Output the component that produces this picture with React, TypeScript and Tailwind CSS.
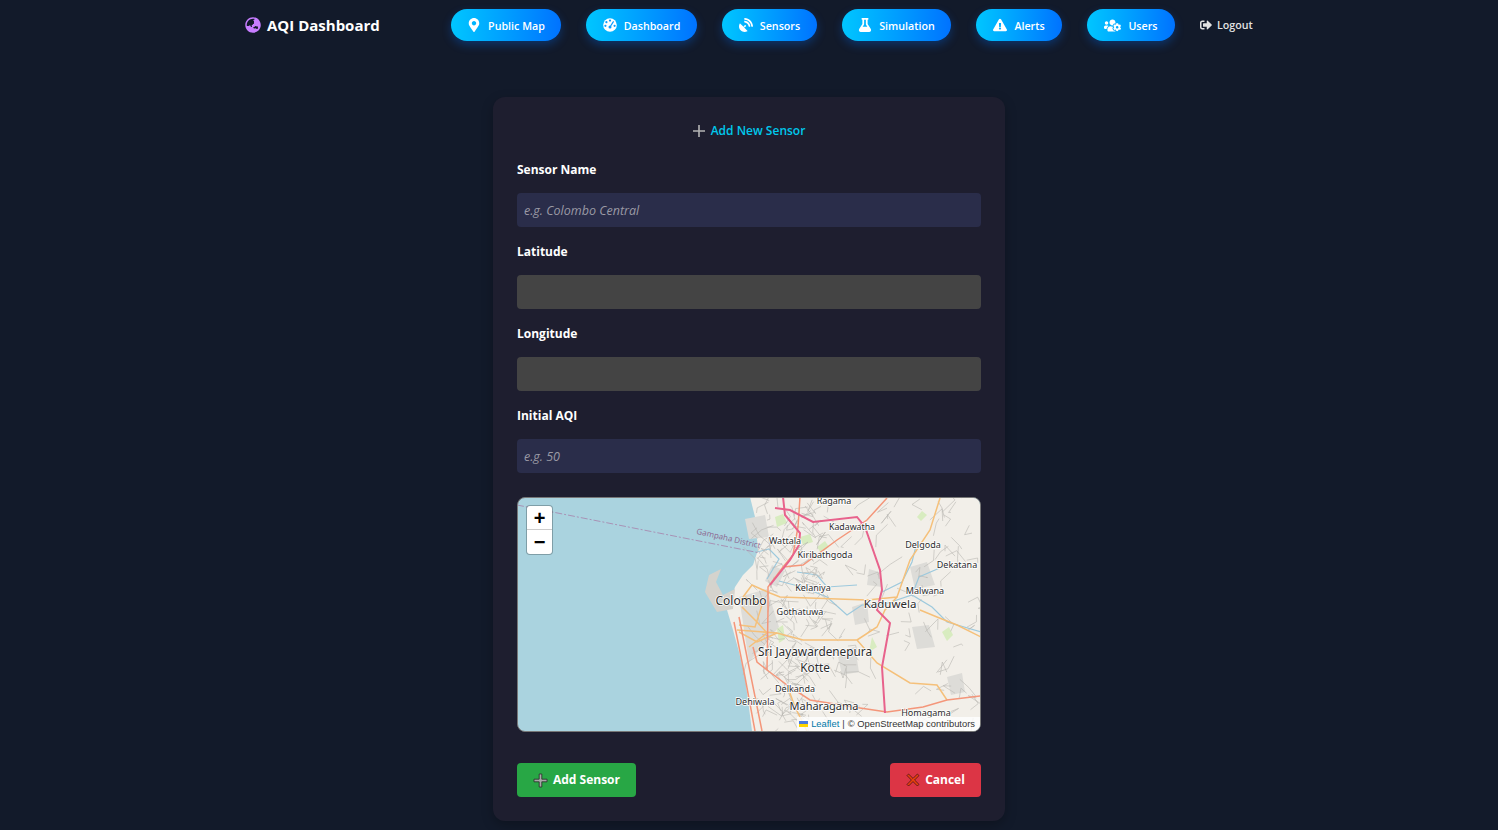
import { FaGlobeAsia, FaMapMarkerAlt, FaSatelliteDish, FaFlask, FaExclamationTriangle, FaUsersCog, FaSignOutAlt } from 'react-icons/fa'

function GaugeIcon({ className }: { className?: string }) {
  return (
    <svg className={className} width="14" height="14" viewBox="0 0 14 14">
      <circle cx="7" cy="7" r="6.8" fill="#fff" />
      <circle cx="7" cy="2.6" r="1.1" fill="#0a9cff" />
      <circle cx="3.4" cy="4.2" r="1.1" fill="#0a9cff" />
      <circle cx="2.4" cy="7.8" r="1.1" fill="#0a9cff" />
      <circle cx="11.6" cy="7.8" r="1.1" fill="#0a9cff" />
      <path d="M10.6 3.4 7.6 8" stroke="#0a9cff" strokeWidth="1.2" />
      <circle cx="7" cy="9" r="1.5" fill="#0a9cff" />
    </svg>
  )
}

const navLinks = [
  { label: 'Public Map', icon: FaMapMarkerAlt, width: 'w-[110px]', iconSize: 'text-[14px]' },
  { label: 'Dashboard', icon: GaugeIcon, width: 'w-[111px]', iconSize: '' },
  { label: 'Sensors', icon: FaSatelliteDish, width: 'w-[95px]', iconSize: 'text-[14px]' },
  { label: 'Simulation', icon: FaFlask, width: 'w-[109px]', iconSize: 'text-[14px]' },
  { label: 'Alerts', icon: FaExclamationTriangle, width: 'w-[86px]', iconSize: 'text-[14px]' },
  { label: 'Users', icon: FaUsersCog, width: 'w-[88px]', iconSize: 'text-[17px]' },
]

// motorways, trunk roads and secondary roads, traced off the tiles
const motorways = [
  'M258 11 L273 13 L296 25 L340 20 L348 30 L363 73 L365 93 L360 113 L373 126 L365 170 L368 216',
  'M266 0 L268 18 L283 36 L282 48 L273 63 L253 88',
]
const trunks = [
  'M370 1 L350 23 L320 43 L286 68 L266 70 L251 90 L251 113 L250 173 L270 188 L293 203 L343 211 L370 215 L406 210 L430 203 L464 199',
  'M283 0 L281 30 L276 58 L266 70',
  'M222 120 L232 170 L245 234',
  'M217 125 L228 180 L238 234',
  'M250 173 L240 165 L236 150',
]
const secondary = [
  'M423 1 L413 33 L393 63 L380 100 L350 103 L263 100 L253 96 L235 88 L226 100',
  'M220 133 L260 136 L286 143 L340 143 L360 166 L393 186 L420 188 L430 203',
  'M380 100 L368 113 L360 130 L340 143',
  'M225 110 L240 125 L250 136 L232 150',
  'M222 135 L240 145 L260 136',
  'M270 188 L278 210 L290 234',
  'M403 113 L420 120 L440 128 L464 140',
  'M228 100 L245 108 L238 130 L222 128',
]
const rivers = [
  'M240 55 L252 52 L262 62 L250 82',
  'M262 84 L285 90 L310 100 L330 118 L345 108 L365 108 L395 98 L415 110 L430 125 L464 135',
  'M280 75 L300 78 L310 90 L340 88',
  'M365 95 L385 85 L395 65 L400 45',
  'M395 98 L402 80 L425 70',
]
const parks = [
  'M300 50 L308 44 L312 50 L304 56Z',
  'M400 20 L405 14 L410 18 L404 24Z',
  'M258 20 L266 17 L270 26 L260 30Z',
  'M283 40 L293 37 L296 45 L286 48Z',
  'M425 135 L432 130 L436 138 L430 144Z',
  'M260 132 L266 128 L268 142 L262 146Z',
  'M355 140 L360 150 L352 155Z',
]
const urban = [
  'M352 72 L362 75 L365 90 L350 88Z',
  'M393 70 L410 65 L418 88 L398 92Z',
  'M395 130 L412 128 L418 150 L400 152Z',
  'M430 180 L445 176 L448 195 L434 198Z',
  'M320 155 L338 150 L342 175 L325 178Z',
  'M335 110 L350 105 L352 125 L338 128Z',
  'M228 22 L248 18 L252 40 L232 42Z',
  'M255 68 L268 74 L260 90 L248 84Z',
  'M222 100 L250 92 L262 130 L232 165Z',
]
const mapLabels = [
  { text: 'Ragama', x: 317, y: 7, size: 9 },
  { text: 'Kadawatha', x: 335, y: 33, size: 8.8 },
  { text: 'Wattala', x: 268, y: 47, size: 9 },
  { text: 'Kiribathgoda', x: 308, y: 61, size: 9 },
  { text: 'Delgoda', x: 406, y: 51, size: 9 },
  { text: 'Dekatana', x: 440, y: 71, size: 9 },
  { text: 'Kelaniya', x: 296, y: 94, size: 9 },
  { text: 'Malwana', x: 408, y: 97, size: 9 },
  { text: 'Colombo', x: 224, y: 108, size: 12 },
  { text: 'Kaduwela', x: 373, y: 111, size: 11.5 },
  { text: 'Gothatuwa', x: 283, y: 118, size: 9 },
  { text: 'Sri Jayawardenepura', x: 298, y: 159, size: 11.8 },
  { text: 'Kotte', x: 298, y: 175, size: 11.8 },
  { text: 'Delkanda', x: 278, y: 195, size: 9 },
  { text: 'Dehiwala', x: 238, y: 208, size: 9 },
  { text: 'Maharagama', x: 307, y: 213, size: 11 },
  { text: 'Homagama', x: 409, y: 219, size: 9 },
]

// the tiles' mesh of small roads, scattered over the land and thicker round the city
function minorRoads() {
  const roads: string[] = []
  let seed = 17
  const rnd = () => {
    seed = (seed * 16807) % 2147483647
    return seed / 2147483647
  }
  for (let i = 0; i < 280; i++) {
    const city = i % 2 === 0
    const x = city ? 235 + rnd() * 70 : 250 + rnd() * 214
    const y = rnd() * 234
    const coast = 250 - Math.abs(y - 100) * 0.05
    if (x < coast - 10) continue
    const x2 = x + (rnd() - 0.5) * 26
    const y2 = y + (rnd() - 0.5) * 26
    const x3 = x2 + (rnd() - 0.5) * 26
    const y3 = y2 + (rnd() - 0.5) * 26
    roads.push(`M${x.toFixed(1)} ${y.toFixed(1)} L${x2.toFixed(1)} ${y2.toFixed(1)} L${x3.toFixed(1)} ${y3.toFixed(1)}`)
  }
  return roads
}

function Field({ label, placeholder, disabled }: { label: string; placeholder?: string; disabled?: boolean }) {
  return (
    <div className="h-[82px]">
      <label className="block h-[34px] pt-[2px] text-[12px] leading-[18px] font-bold text-white">{label}</label>
      <input
        disabled={disabled}
        placeholder={placeholder}
        className={`block h-[34px] w-full rounded-[4px] px-[7px] text-[12.5px] text-white outline-none placeholder:italic placeholder:text-[#9a9aa5] ${disabled ? 'bg-[#444444]' : 'bg-[#2a2d4a]'}`}
      />
    </div>
  )
}

function SensorMap() {
  return (
    <div className="relative mt-[10px] h-[235px] overflow-hidden rounded-[8px] border border-[#777] bg-[#aad3df]">
      <svg className="block h-full w-full" viewBox="1 1 462 233" preserveAspectRatio="none">
        <path d="M233 0 L238 20 L241 53 L236 68 L226 78 L218 90 L214 104 L210 113 L216 133 L222 155 L228 180 L235 234 L464 234 L464 0Z" fill="#f2efe9" />
        <path d="M188 95 L192 78 L204 72 L199 85 L206 98 L218 92 L216 112 L200 115Z" fill="#d5d3cd" />
        {urban.map(d => <path key={d} d={d} fill="#dddcd8" />)}
        {parks.map(d => <path key={d} d={d} fill="#d8ecc0" />)}
        {rivers.map(d => <path key={d} d={d} fill="none" stroke="#9dc9dd" strokeWidth="1.2" />)}
        {minorRoads().map(d => <path key={d} d={d} fill="none" stroke="#b9b7b1" strokeWidth="0.6" />)}
        {secondary.map(d => <path key={d} d={d} fill="none" stroke="#f5c07a" strokeWidth="1.5" />)}
        {trunks.map(d => <path key={d} d={d} fill="none" stroke="#f4967a" strokeWidth="1.5" />)}
        {motorways.map(d => <path key={d} d={d} fill="none" stroke="#e8628c" strokeWidth="2" />)}
        <path d="M0 8 L243 56" fill="none" stroke="#a892b5" strokeWidth="1" strokeDasharray="7 2 2 2" />
        <text x="211" y="44" transform="rotate(13 211 44)" textAnchor="middle" fontSize="8" fill="#8e6c94" fontFamily="'Noto Sans', sans-serif">Gampaha District</text>
        {mapLabels.map(l => (
          <text
            key={l.text}
            x={l.x}
            y={l.y}
            textAnchor="middle"
            fontSize={l.size}
            fill="#2c2c2c"
            stroke="#fff"
            strokeWidth="1.5"
            paintOrder="stroke"
            fontFamily="'Noto Sans', sans-serif"
          >
            {l.text}
          </text>
        ))}
      </svg>

      <div className="absolute left-[9px] top-[8px] w-[25px] overflow-hidden rounded-[3px] bg-white shadow-[0_0_0_1px_rgba(0,0,0,0.25)]">
        <div className="flex h-[24px] items-center justify-center border-b border-[#ccc] text-[20px] leading-none font-bold text-black" style={{ fontFamily: "'Liberation Sans', sans-serif" }}>+</div>
        <div className="flex h-[24px] items-center justify-center text-[20px] leading-none font-bold text-black" style={{ fontFamily: "'Liberation Sans', sans-serif" }}>−</div>
      </div>

      <div className="absolute right-0 bottom-0 flex h-[14px] items-center bg-white/80 pr-[5px] pl-[2px] text-[9.4px] text-[#333]" style={{ fontFamily: "'Liberation Sans', sans-serif" }}>
        <svg className="mr-[3px]" width="9" height="6" viewBox="0 0 9 6">
          <rect width="9" height="3" fill="#4C7BE1" />
          <rect y="3" width="9" height="3" fill="#FFD500" />
        </svg>
        <span className="text-[#0078a8]">Leaflet</span>
        <span className="mx-[3px]">|</span>
        <span>© OpenStreetMap contributors</span>
      </div>
    </div>
  )
}

export default function App() {
  return (
    <div className="h-screen overflow-hidden bg-[#121a2a]" style={{ fontFamily: "'Open Sans', 'Noto Sans', sans-serif" }}>
      <nav className="flex h-[50px] items-center pl-[245px]">
        <div className="flex w-[206px] items-center gap-[6px] text-[15px] font-bold text-white">
          <FaGlobeAsia className="text-[16px] text-[#c77dff]" />
          <span>AQI Dashboard</span>
        </div>
        <div className="flex items-center gap-[25px]">
          {navLinks.map(({ label, icon: Icon, width, iconSize }) => (
            <a key={label} className={`flex h-[32px] items-center justify-center gap-[7px] rounded-full bg-gradient-to-r from-[#00c6ff] to-[#0072ff] text-[10.7px] leading-[16px] font-semibold text-white shadow-[0_4px_10px_rgba(0,114,255,0.3)] ${width}`}>
              <Icon className={iconSize} />
              <span className="pt-px">{label}</span>
            </a>
          ))}
          <a className="flex items-center gap-[5px] text-[10.7px] font-semibold text-[#e2e2e2]">
            <FaSignOutAlt className="text-[12px]" />
            Logout
          </a>
        </div>
      </nav>

      <main className="mx-auto mt-[47px] h-[724px] w-[512px] rounded-[12px] bg-[#1e1e2f] px-6 pt-[24px] shadow-[0_4px_12px_rgba(0,0,0,0.25)]">
        <h2 className="flex h-[20px] items-center justify-center gap-[6px] text-[12px] font-semibold text-[#00c8ec]">
          <svg width="12" height="12" viewBox="0 0 12 12">
            <path d="M6 0v12M0 6h12" stroke="#b4b4b4" strokeWidth="1.6" />
          </svg>
          Add New Sensor
        </h2>
        <div className="mt-[18px]">
          <Field label="Sensor Name" placeholder="e.g. Colombo Central" />
          <Field label="Latitude" disabled />
          <Field label="Longitude" disabled />
          <Field label="Initial AQI" placeholder="e.g. 50" />
        </div>
        <SensorMap />
        <div className="mt-[31px] flex items-center justify-between">
          <button className="flex h-[34px] w-[119px] items-center justify-center gap-[5px] rounded-[4px] bg-[#28a745] text-[12px] font-bold text-white">
            <svg width="15" height="15" viewBox="0 0 15 15">
              <path d="M6.2 1h2.6v5.2H14v2.6H8.8V14H6.2V8.8H1V6.2h5.2z" fill="#a8a8a8" stroke="#2a2a2a" strokeWidth="0.8" />
            </svg>
            Add Sensor
          </button>
          <button className="flex h-[34px] w-[91px] items-center justify-center gap-[5px] rounded-[4px] bg-[#dc3545] text-[12px] font-bold text-white">
            <svg width="14" height="14" viewBox="0 0 14 14">
              <path d="M2.6 1 7 5.4 11.4 1 13 2.6 8.6 7l4.4 4.4-1.6 1.6L7 8.6 2.6 13 1 11.4 5.4 7 1 2.6z" fill="#e8400c" stroke="#3a1010" strokeWidth="0.7" />
            </svg>
            Cancel
          </button>
        </div>
      </main>
    </div>
  )
}
